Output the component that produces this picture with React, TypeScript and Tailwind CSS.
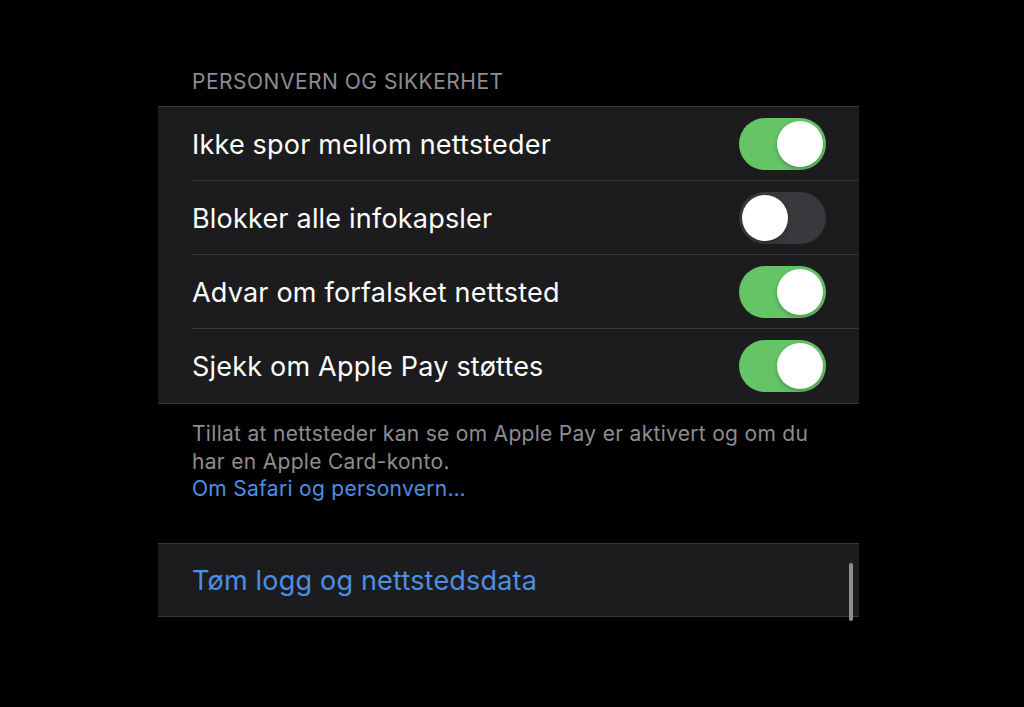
import React from 'react';

const rows = [
  { label: 'Ikke spor mellom nettsteder', on: true },
  { label: 'Blokker alle infokapsler', on: false },
  { label: 'Advar om forfalsket nettsted', on: true },
  { label: 'Sjekk om Apple Pay støttes', on: true },
];

function Toggle({ on }: { on: boolean }) {
  return (
    <div
      className={`flex h-[52px] w-[87px] items-center rounded-full px-[3px] ${
        on ? 'justify-end bg-[#65c466]' : 'justify-start bg-[#39393d]'
      }`}
    >
      <div className="h-[46px] w-[46px] rounded-full bg-white shadow-[0_2px_4px_rgba(0,0,0,0.25)]" />
    </div>
  );
}

export default function App() {
  return (
    <div
      className="h-[707px] w-[1024px] overflow-hidden bg-black"
      style={{ fontFamily: 'Inter, "Noto Sans", sans-serif' }}
    >
      <div className="ml-[158px] w-[701px] pt-[70px]">
        <div className="pl-[34px] text-[21px] leading-[24px] tracking-[0.5px] text-[#8d8d92]">
          PERSONVERN OG SIKKERHET
        </div>
        <div className="mt-[12px] border-y border-[#38383a] bg-[#1c1c1e]">
          {rows.map((r, i) => (
            <div key={r.label} className="pl-[34px]">
              <div
                className={`flex h-[74px] items-center justify-between pr-[33px] ${
                  i < rows.length - 1 ? 'border-b border-[#38383a]' : ''
                }`}
              >
                <span className="pt-[3px] text-[27px] tracking-[0.2px] text-white">{r.label}</span>
                <Toggle on={r.on} />
              </div>
            </div>
          ))}
        </div>
        <div className="w-[670px] pl-[34px] pt-[16px] text-[21px] leading-[27.5px] tracking-[0.3px] text-[#8d8d92]">
          Tillat at nettsteder kan se om Apple Pay er aktivert og om du har en Apple Card-konto.
          <div className="text-[#4d8fe3]">Om Safari og personvern…</div>
        </div>
        <div className="relative mt-[40px] flex h-[74px] items-center border-y border-[#38383a] bg-[#1c1c1e] pl-[34px]">
          <span className="pt-[3px] text-[27px] tracking-[0.2px] text-[#4d8fe3]">Tøm logg og nettstedsdata</span>
          <div className="absolute right-[6px] top-[19px] h-[58px] w-[4px] rounded-full bg-[#8e8e93]" />
        </div>
      </div>
    </div>
  );
}
